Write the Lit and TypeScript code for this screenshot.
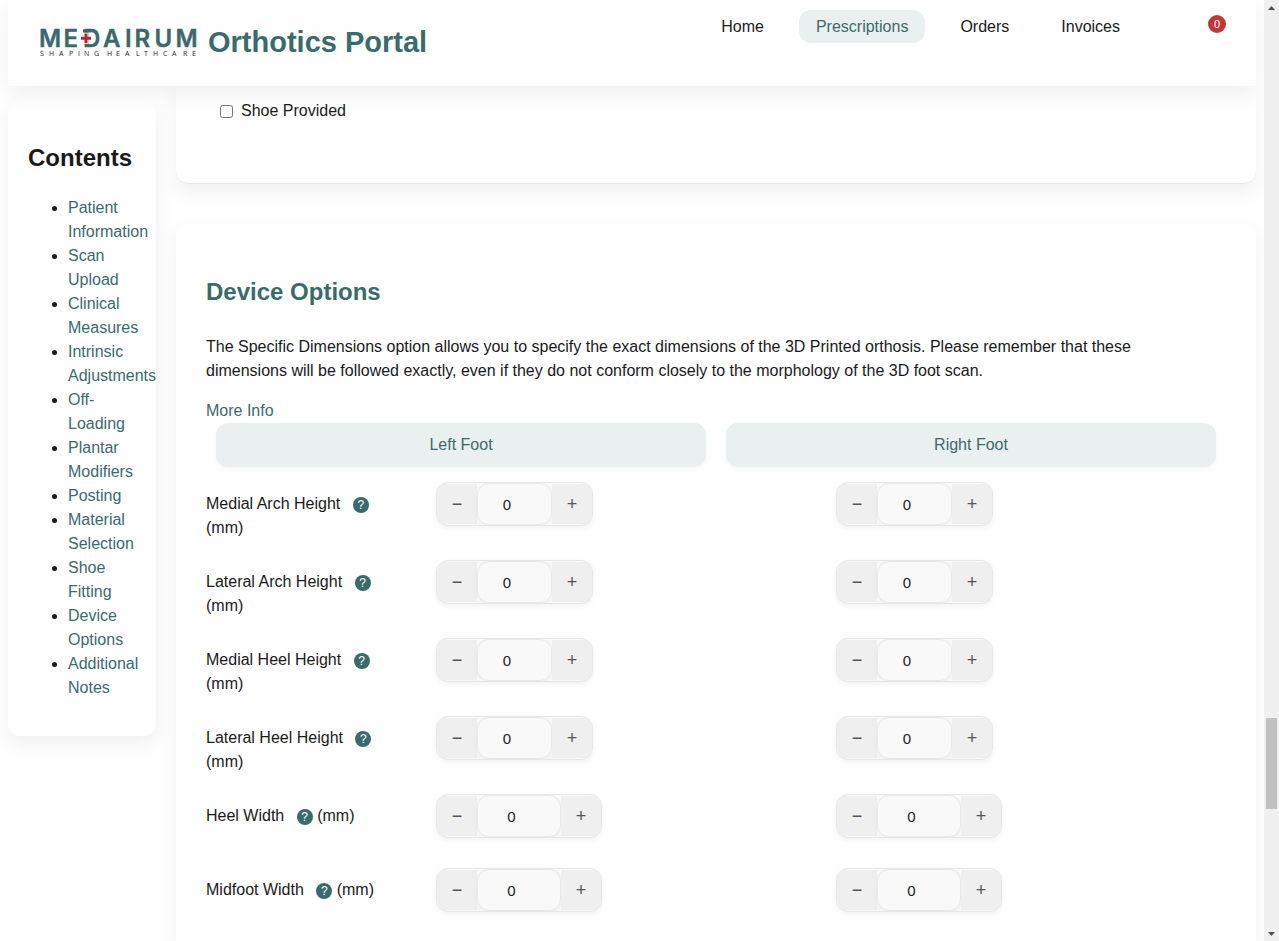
import { LitElement, html, css, svg } from "lit";
import { customElement, property, state } from "lit/decorators.js";

const SECTIONS = [
  "Patient Information",
  "Scan Upload",
  "Clinical Measures",
  "Intrinsic Adjustments",
  "Off-Loading",
  "Plantar Modifiers",
  "Posting",
  "Material Selection",
  "Shoe Fitting",
  "Device Options",
  "Additional Notes",
];

const NAV = ["Home", "Prescriptions", "Orders", "Invoices"];

const MEASURES = [
  { name: "Medial Arch Height", wide: false },
  { name: "Lateral Arch Height", wide: false },
  { name: "Medial Heel Height", wide: false },
  { name: "Lateral Heel Height", wide: false },
  { name: "Heel Width", wide: true },
  { name: "Midfoot Width", wide: true },
];

const slug = (text: string) => text.toLowerCase().replace(/[^a-z]+/g, "-");

@customElement("brand-logo")
class BrandLogo extends LitElement {
  static styles = css`
    :host {
      display: block;
    }
    svg {
      display: block;
      overflow: visible;
    }
    .word {
      font: 600 24px Inter, sans-serif;
      fill: #3b686c;
      stroke: #3b686c;
      stroke-width: 0.4px;
    }
    .tag {
      font: 400 7px "Open Sans", sans-serif;
      fill: #222;
    }
  `;
  render() {
    return html`<svg width="158" height="40" viewBox="0 0 158 40" role="img" aria-label="Medairum Shaping Healthcare">
      ${svg`
        <text class="word" y="25" x="-1 23.500 43 63 85 94.500 114.500 135.500">MEDAIRUM</text>
        <path d="M40 10.500h8v11.500h-8z" fill="#fff" />
        <path d="M43 7.300h8v3.200h-8z" fill="#3b686c" />
        <path d="M44.500 11.500h3v3.300h3.500v3h-3.500v3.400h-3v-3.400h-3.500v-3h3.500z" fill="#b3282d" />
        <text class="tag" y="34" x="0 9 19 29 38 44 54 67 76 85 96 104 113 123 132 143 152">SHAPINGHEALTHCARE</text>
      `}
    </svg>`;
  }
}

@customElement("number-stepper")
class NumberStepper extends LitElement {
  @property() label = "";
  @property({ type: Boolean }) wide = false;
  @state() private value = 0;

  static styles = css`
    :host {
      display: block;
    }
    .stepper {
      display: inline-flex;
      box-sizing: border-box;
      height: 44px;
      border: 1px solid #e6e6e6;
      border-radius: 12px;
      background: #f9f9f9;
      box-shadow: 0 2px 5px rgba(0, 0, 0, 0.05);
      overflow: hidden;
      vertical-align: top;
    }
    button {
      width: 40px;
      margin: 1px 0;
      padding: 0;
      border: 0;
      background: #efefef;
      color: #555;
      font: 18px "Liberation Sans", Arial, sans-serif;
      cursor: pointer;
    }
    input {
      box-sizing: border-box;
      width: 75px;
      margin: 0;
      padding: 0;
      border: 1px solid #e8e8e8;
      border-radius: 12px;
      background: #f9f9f9;
      box-shadow: 0 2px 5px rgba(0, 0, 0, 0.05);
      color: #222;
      font: 15px "Liberation Sans", Arial, sans-serif;
      text-align: center;
    }
    .wide input {
      width: 84px;
    }
  `;
  render() {
    return html`<div class="stepper ${this.wide ? "wide" : ""}">
      <button type="button" aria-label="Decrease ${this.label}" @click=${() => this.value--}>−</button>
      <input
        type="number"
        aria-label=${this.label}
        .value=${String(this.value)}
        @change=${(e: Event) => (this.value = Number((e.target as HTMLInputElement).value))}
      />
      <button type="button" aria-label="Increase ${this.label}" @click=${() => this.value++}>+</button>
    </div>`;
  }
}

@customElement("app-root")
class AppRoot extends LitElement {
  static styles = css`
    :host {
      display: flex;
      height: 100vh;
      overflow: hidden;
      background: #fefefe;
      color: #1a1a1a;
      font: 16px/24px "Liberation Sans", Arial, sans-serif;
    }
    a {
      color: #3a6b6c;
      text-decoration: none;
    }
    .page {
      flex: 1;
      min-width: 0;
      padding: 0 8px;
      overflow: hidden;
    }
    .header {
      position: relative;
      z-index: 2;
      box-sizing: border-box;
      height: 86px;
      display: flex;
      justify-content: space-between;
      align-items: flex-start;
      padding: 10px 30px;
      background: #fefefe;
      box-shadow: 0 8px 20px rgba(0, 0, 0, 0.06);
    }
    .brand {
      display: flex;
      align-items: center;
      gap: 10px;
      padding: 12px 0 0 2px;
    }
    .brand h1 {
      margin: 0;
      color: #3a6b6c;
      font-size: 29px;
      line-height: 40px;
    }
    .nav {
      display: flex;
      align-items: flex-start;
      gap: 18px;
    }
    .nav a {
      padding: 5px 17px 4px;
      border-radius: 12px;
      color: #1a1a1a;
    }
    .nav a.active {
      background: #eaf0f0;
      color: #3a6b6c;
    }
    .badge {
      width: 18px;
      margin: 5px 0 0 53px;
      border-radius: 9px;
      background: #c23838;
      color: #fff;
      font-size: 11px;
      line-height: 18px;
      text-align: center;
    }
    .body {
      display: flex;
      align-items: flex-start;
      gap: 20px;
    }
    .contents,
    .card {
      box-sizing: border-box;
      border-radius: 12px;
      background: #fefefe;
      box-shadow: 0 8px 20px rgba(0, 0, 0, 0.06);
    }
    .contents {
      flex: none;
      width: 148px;
      margin-top: 14px;
      padding: 20px;
    }
    h2 {
      margin: 20px 0;
      font-size: 24px;
      line-height: 36px;
    }
    .contents ul {
      margin: 0 0 16px;
      padding-left: 40px;
    }
    .main {
      flex: 1;
      min-width: 0;
    }
    .card {
      padding: 30px;
    }
    .card h2 {
      margin: 20px 0 25px;
      color: #3a6b6c;
    }
    .card.fitting {
      padding: 13px 44px 60px;
      border-bottom: 1px solid #e6e6e6;
      border-radius: 0 0 12px 12px;
    }
    .options {
      margin-top: 40px;
    }
    .check {
      display: flex;
      align-items: center;
      gap: 8px;
    }
    .check input {
      margin: 0;
    }
    .intro {
      max-width: 980px;
      margin: 0 0 16px;
    }
    .feet {
      display: grid;
      grid-template-columns: 1fr 1fr;
      gap: 20px;
      margin: 0 10px 15px;
    }
    .feet button {
      padding: 10px;
      border: 0;
      border-radius: 12px;
      background: #eaf0f0;
      box-shadow: 0 2px 5px rgba(0, 0, 0, 0.04);
      color: #3a6b6c;
      font: inherit;
    }
    .rows {
      display: grid;
      gap: 20px;
    }
    .row {
      display: grid;
      grid-template-columns: 230px 40fr 39fr;
      align-items: start;
    }
    .name {
      max-width: 190px;
      padding-top: 10px;
    }
    .row number-stepper {
      margin-bottom: 10px;
    }
    .help {
      display: inline-block;
      width: 16px;
      margin-left: 8px;
      padding: 0;
      border: 0;
      border-radius: 8px;
      background: #3a6b6c;
      color: #fff;
      font: 12px/16px "Liberation Sans", Arial, sans-serif;
      vertical-align: 0;
    }
    .scrollbar {
      flex: none;
      width: 15px;
      display: flex;
      flex-direction: column;
      align-items: center;
      background: #f0f0f0;
    }
    .scrollbar svg {
      flex: none;
    }
    .before {
      flex: 703;
    }
    .thumb {
      flex: 91;
      width: 11px;
      background: #c1c1c1;
    }
    .after {
      flex: 117;
    }
  `;

  render() {
    return html`
      <div class="page">
        <header class="header">
          <div class="brand">
            <brand-logo></brand-logo>
            <h1>Orthotics Portal</h1>
          </div>
          <nav class="nav" aria-label="Main">
            ${NAV.map(
              (item) => html`<a href="#${slug(item)}" class=${item === "Prescriptions" ? "active" : ""}>${item}</a>`
            )}
            <span class="badge">0</span>
          </nav>
        </header>
        <div class="body">
          <aside class="contents">
            <h2>Contents</h2>
            <ul>
              ${SECTIONS.map((s) => html`<li><a href="#${slug(s)}">${s}</a></li>`)}
            </ul>
          </aside>
          <main class="main">
            <section class="card fitting">
              <label class="check"><input type="checkbox" />Shoe Provided</label>
            </section>
            <section class="card options" id="device-options">
              <h2>Device Options</h2>
              <p class="intro">
                The Specific Dimensions option allows you to specify the exact dimensions of the 3D Printed orthosis.
                Please remember that these dimensions will be followed exactly, even if they do not conform closely to
                the morphology of the 3D foot scan.
              </p>
              <a href="#more-info">More Info</a>
              <div class="feet">
                <button type="button">Left Foot</button>
                <button type="button">Right Foot</button>
              </div>
              <div class="rows">
                ${MEASURES.map(
                  (m) => html`<div class="row">
                    <div class="name">
                      ${m.name} <button class="help" type="button" aria-label="About ${m.name}">?</button> (mm)
                    </div>
                    <number-stepper label="Left ${m.name}" ?wide=${m.wide}></number-stepper>
                    <number-stepper label="Right ${m.name}" ?wide=${m.wide}></number-stepper>
                  </div>`
                )}
              </div>
            </section>
          </main>
        </div>
      </div>
      <div class="scrollbar" aria-hidden="true">
        <svg width="15" height="15"><path d="M4 10h7L7.500 6z" fill="#505050" /></svg>
        <div class="before"></div>
        <div class="thumb"></div>
        <div class="after"></div>
        <svg width="15" height="15"><path d="M4 6h7L7.500 10z" fill="#505050" /></svg>
      </div>
    `;
  }
}
